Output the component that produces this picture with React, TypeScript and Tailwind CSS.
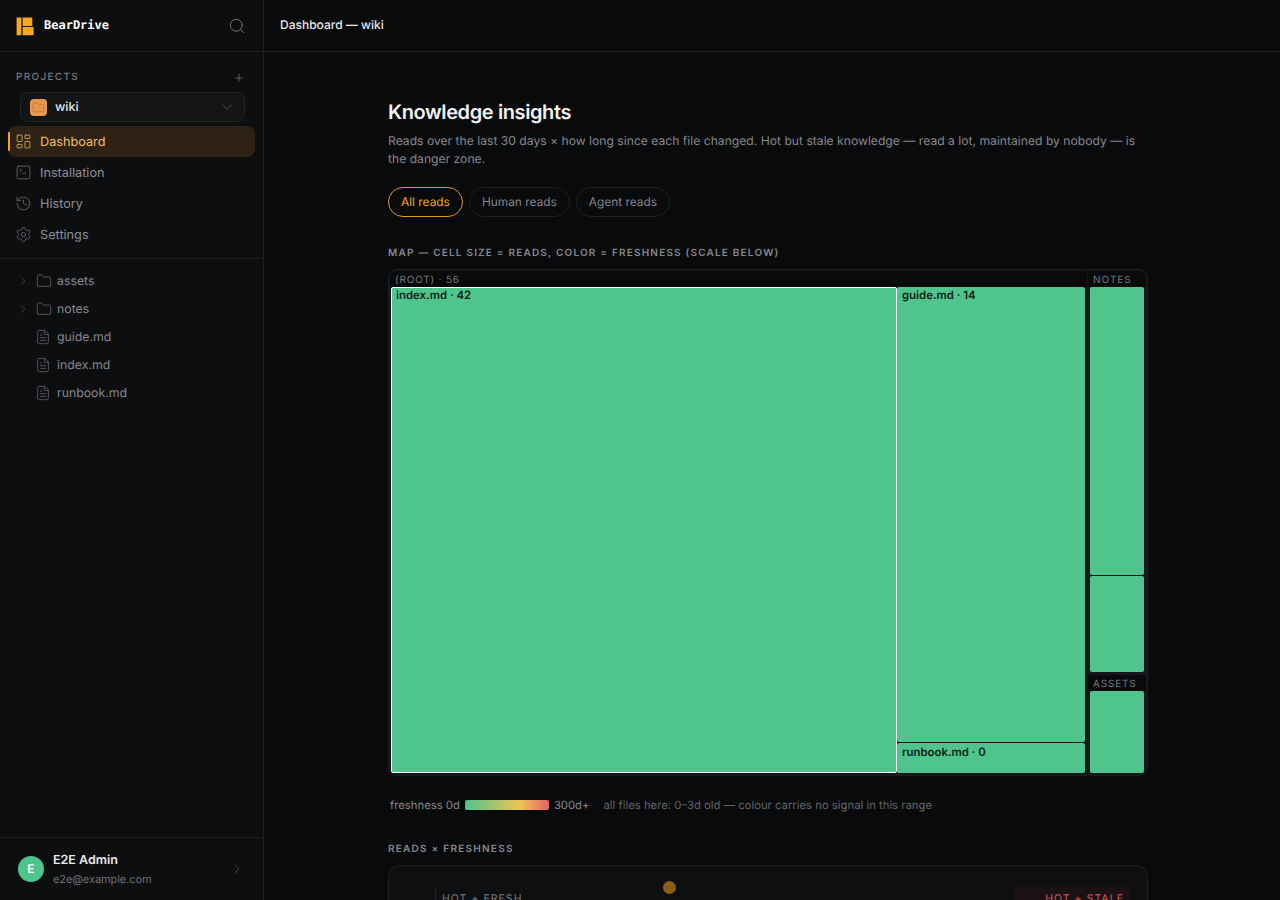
import React from "react";
import { Search, Plus, ChevronDown, ChevronRight, Folder, FileText, LayoutDashboard, SquareTerminal, History, Settings } from "lucide-react";

const nav = [
  { label: "Installation", Icon: SquareTerminal },
  { label: "History", Icon: History },
  { label: "Settings", Icon: Settings },
];

const Cell = ({ className, label }: { className: string; label?: string }) => (
  <div className={"rounded-[2px] bg-[#4fc48d] px-[5px] pt-[1px] text-[11.4px] leading-[15px] font-semibold text-[#10231a] " + className}>{label}</div>
);

export default function App() {
  return (
    <div className="flex h-[900px] w-[1280px] overflow-hidden bg-[#090a0c] font-['Inter',sans-serif] text-[#e8e8ea] [text-rendering:geometricPrecision]">
      <aside className="flex h-full w-[264px] shrink-0 flex-col border-r border-[#1d1f22] bg-[#0d0e10]">
        <div className="flex h-[52px] shrink-0 items-center justify-between border-b border-[#1d1f22] pl-[16px] pr-[17px]">
          <div className="flex items-center gap-[10px]">
            <svg width="18" height="19" viewBox="0 0 18 19" className="mt-[1px]">
              <path d="M0.6 0.5h4.8v17.7H0.6z M6.6 0.5h9.7v8.4H6.6z M6.6 10h11v8.2h-11z" fill="#f5a623" />
            </svg>
            <span className="mb-[1px] font-['DejaVu_Sans_Mono',monospace] text-[12px] font-bold text-white">BearDrive</span>
          </div>
          <Search size={18} strokeWidth={1.1} className="mt-[1px] text-[#85878c]" />
        </div>
        <div className="flex items-center justify-between pl-[16px] pr-[18px] pt-[18px]">
          <span className="text-[10px] leading-[14px] font-medium tracking-[0.13em] text-[#77797f]">PROJECTS</span>
          <Plus size={12} strokeWidth={1.4} className="mt-[2px] text-[#77797f]" />
        </div>
        <div className="ml-[20px] mr-[18px] mt-[8px] flex h-[30px] items-center rounded-[8px] border border-[#232529] bg-[#131416] pl-[9px] pr-[8px]">
          <span className="flex h-[17px] w-[17px] items-center justify-center rounded-[4px] bg-[#e9974b]">
            <Folder size={13} strokeWidth={1.5} className="text-[#bd7a3d]" />
          </span>
          <span className="ml-[8px] flex-1 pt-[2px] text-[12.5px] font-medium text-[#e4e4e6]">wiki</span>
          <ChevronDown size={18} strokeWidth={1.1} className="text-[#5f6166]" />
        </div>
        <nav className="mt-[4px] flex flex-col px-[8px]">
          <div className="relative flex h-[31px] items-center gap-[8px] rounded-[8px] bg-[#2e2214] pl-[7px] text-[12.7px] text-[#eebc6d]">
            <span className="absolute left-0 top-[6px] h-[19px] w-[2px] rounded-full bg-[#f5a623]" />
            <LayoutDashboard size={17} strokeWidth={1.25} className="text-[#d9a85c]" />
            <span className="pt-[2px]">Dashboard</span>
          </div>
          {nav.map(({ label, Icon }) => (
            <div key={label} className="flex h-[31px] items-center gap-[8px] rounded-[8px] pl-[7px] text-[12.7px] text-[#8d8f94]">
              <Icon size={17} strokeWidth={1.25} className="text-[#65676c]" />
              <span className="pt-[2px]">{label}</span>
            </div>
          ))}
        </nav>
        <div className="mt-[8px] border-t border-[#1d1f22] pt-[8px]">
          {["assets", "notes"].map((n) => (
            <div key={n} className="flex h-[28px] items-center pl-[16px] text-[12.3px] text-[#85878c]">
              <ChevronRight size={14} strokeWidth={1.2} className="text-[#55575c]" />
              <Folder size={16} strokeWidth={1.1} className="ml-[6px] text-[#6b6d72]" />
              <span className="ml-[5px]">{n}</span>
            </div>
          ))}
          {["guide.md", "index.md", "runbook.md"].map((n) => (
            <div key={n} className="flex h-[28px] items-center pl-[35px] text-[12.3px] text-[#85878c]">
              <FileText size={16} strokeWidth={1.1} className="text-[#6b6d72]" />
              <span className="ml-[6px]">{n}</span>
            </div>
          ))}
        </div>
        <div className="mt-auto flex h-[63px] items-center border-t border-[#1d1f22] pl-[18px] pr-[18px]">
          <span className="flex h-[26px] w-[26px] items-center justify-center rounded-full bg-[#4fc48d] text-[12px] font-semibold text-white">E</span>
          <div className="ml-[9px] flex-1">
            <div className="text-[12.5px] leading-[18px] font-semibold text-[#e8e8ea]">E2E Admin</div>
            <div className="mt-[2px] text-[10.9px] leading-[15px] text-[#6f7176]">e2e@example.com</div>
          </div>
          <ChevronRight size={16} strokeWidth={1.1} className="text-[#5f6166]" />
        </div>
      </aside>

      <div className="flex min-w-0 flex-1 flex-col">
        <header className="flex h-[52px] shrink-0 items-center border-b border-[#1d1f22] pb-[1px] pl-[16px] text-[12px] font-medium text-[#e8e8ea]">Dashboard — wiki</header>
        <main className="ml-[124px] w-[760px] pt-[46px]">
          <h1 className="text-[20px] leading-[28px] font-semibold tracking-[-0.02em] text-[#f2f2f3]">Knowledge insights</h1>
          <p className="mt-[6px] text-[12.15px] leading-[18px] text-[#85878c]">Reads over the last 30 days × how long since each file changed. Hot but stale knowledge — read a lot, maintained by nobody — is the danger zone.</p>
          <div className="mt-[19px] flex gap-[6px] text-[11.9px]">
            <span className="flex h-[30px] items-center rounded-full border border-[#e39a1f] px-[12px] text-[#f5a623]">All reads</span>
            <span className="flex h-[30px] items-center rounded-full border border-[#1d1f22] px-[12px] text-[#85878c]">Human reads</span>
            <span className="flex h-[30px] items-center rounded-full border border-[#1d1f22] px-[12px] text-[#85878c]">Agent reads</span>
          </div>
          <h2 className="mt-[29px] text-[10px] leading-[14px] font-semibold tracking-[0.12em] text-[#85878c]">MAP — CELL SIZE = READS, COLOR = FRESHNESS (SCALE BELOW)</h2>

          <div className="mt-[9px] flex h-[507px] gap-[1px] rounded-[8px] border border-[#1a1c1f] bg-[#15171a] p-[1px]">
            <div className="flex w-[697px] flex-col">
              <div className="h-[16px] rounded-tl-[6px] bg-[#090a0c] pl-[5px] pt-[2px] text-[10px] leading-[14px] tracking-[0.08em] text-[#77797f]">(ROOT) · 56</div>
              <div className="flex flex-1 pl-[1px] pb-[1px]">
                <Cell className="h-full w-[506px] rounded-[0px] border border-white !pl-[4px] !pt-0" label="index.md · 42" />
                <div className="flex w-[188px] flex-col gap-[1px]">
                  <Cell className="h-[455px]" label="guide.md · 14" />
                  <Cell className="flex-1 !pt-[2px]" label="runbook.md · 0" />
                </div>
              </div>
            </div>
            <div className="flex flex-1 flex-col gap-[1px]">
              <div className="flex h-[401px] flex-col">
                <div className="h-[16px] rounded-tr-[6px] bg-[#090a0c] pl-[5px] pt-[2px] text-[10px] leading-[14px] tracking-[0.1em] text-[#77797f]">NOTES</div>
                <div className="flex flex-1 flex-col gap-[1px] px-[2px]">
                  <Cell className="h-[288px]" />
                  <Cell className="flex-1" />
                </div>
              </div>
              <div className="mt-[2px] flex flex-1 flex-col">
                <div className="h-[16px] rounded-t-[3px] bg-[#090a0c] pl-[5px] pt-[2px] text-[10px] leading-[14px] tracking-[0.08em] text-[#77797f]">ASSETS</div>
                <div className="flex flex-1 flex-col px-[2px] pb-[1px]">
                  <Cell className="flex-1" />
                </div>
              </div>
            </div>
          </div>

          <div className="mt-[22px] flex items-center pl-[2px] text-[11.3px] leading-[14px] text-[#85878c]">
            <span>freshness 0d</span>
            <span className="ml-[5px] h-[10px] w-[84px] rounded-[2px] bg-[linear-gradient(90deg,#4fc48d,#eec455_65%,#e5636a)]" />
            <span className="ml-[5px]">300d+</span>
            <span className="ml-[14px] text-[#626469]">all files here: 0–3d old — colour carries no signal in this range</span>
          </div>

          <h2 className="mt-[30px] text-[10px] leading-[14px] font-semibold tracking-[0.125em] text-[#85878c]">READS × FRESHNESS</h2>

          <div className="relative mt-[9px] h-[240px] rounded-[12px] border border-[#1d1f22] bg-[#0e0f11]">
            <div className="absolute left-[46px] top-[21px] h-[200px] border-l border-[#1d1f22]" />
            <span className="absolute left-[53px] top-[26px] text-[10.5px] leading-[14px] tracking-[0.1em] text-[#77797f]">HOT + FRESH</span>
            <span className="absolute left-[274px] top-[15px] h-[13px] w-[13px] rounded-full bg-[#8a5f1c]" />
            <div className="absolute left-[626px] top-[21px] flex h-[100px] w-[115px] justify-end bg-[#1a1214] pr-[6px] pt-[5px] text-[10.5px] leading-[14px] tracking-[0.1em] text-[#d0575a]">HOT + STALE</div>
          </div>
        </main>
      </div>
    </div>
  );
}
